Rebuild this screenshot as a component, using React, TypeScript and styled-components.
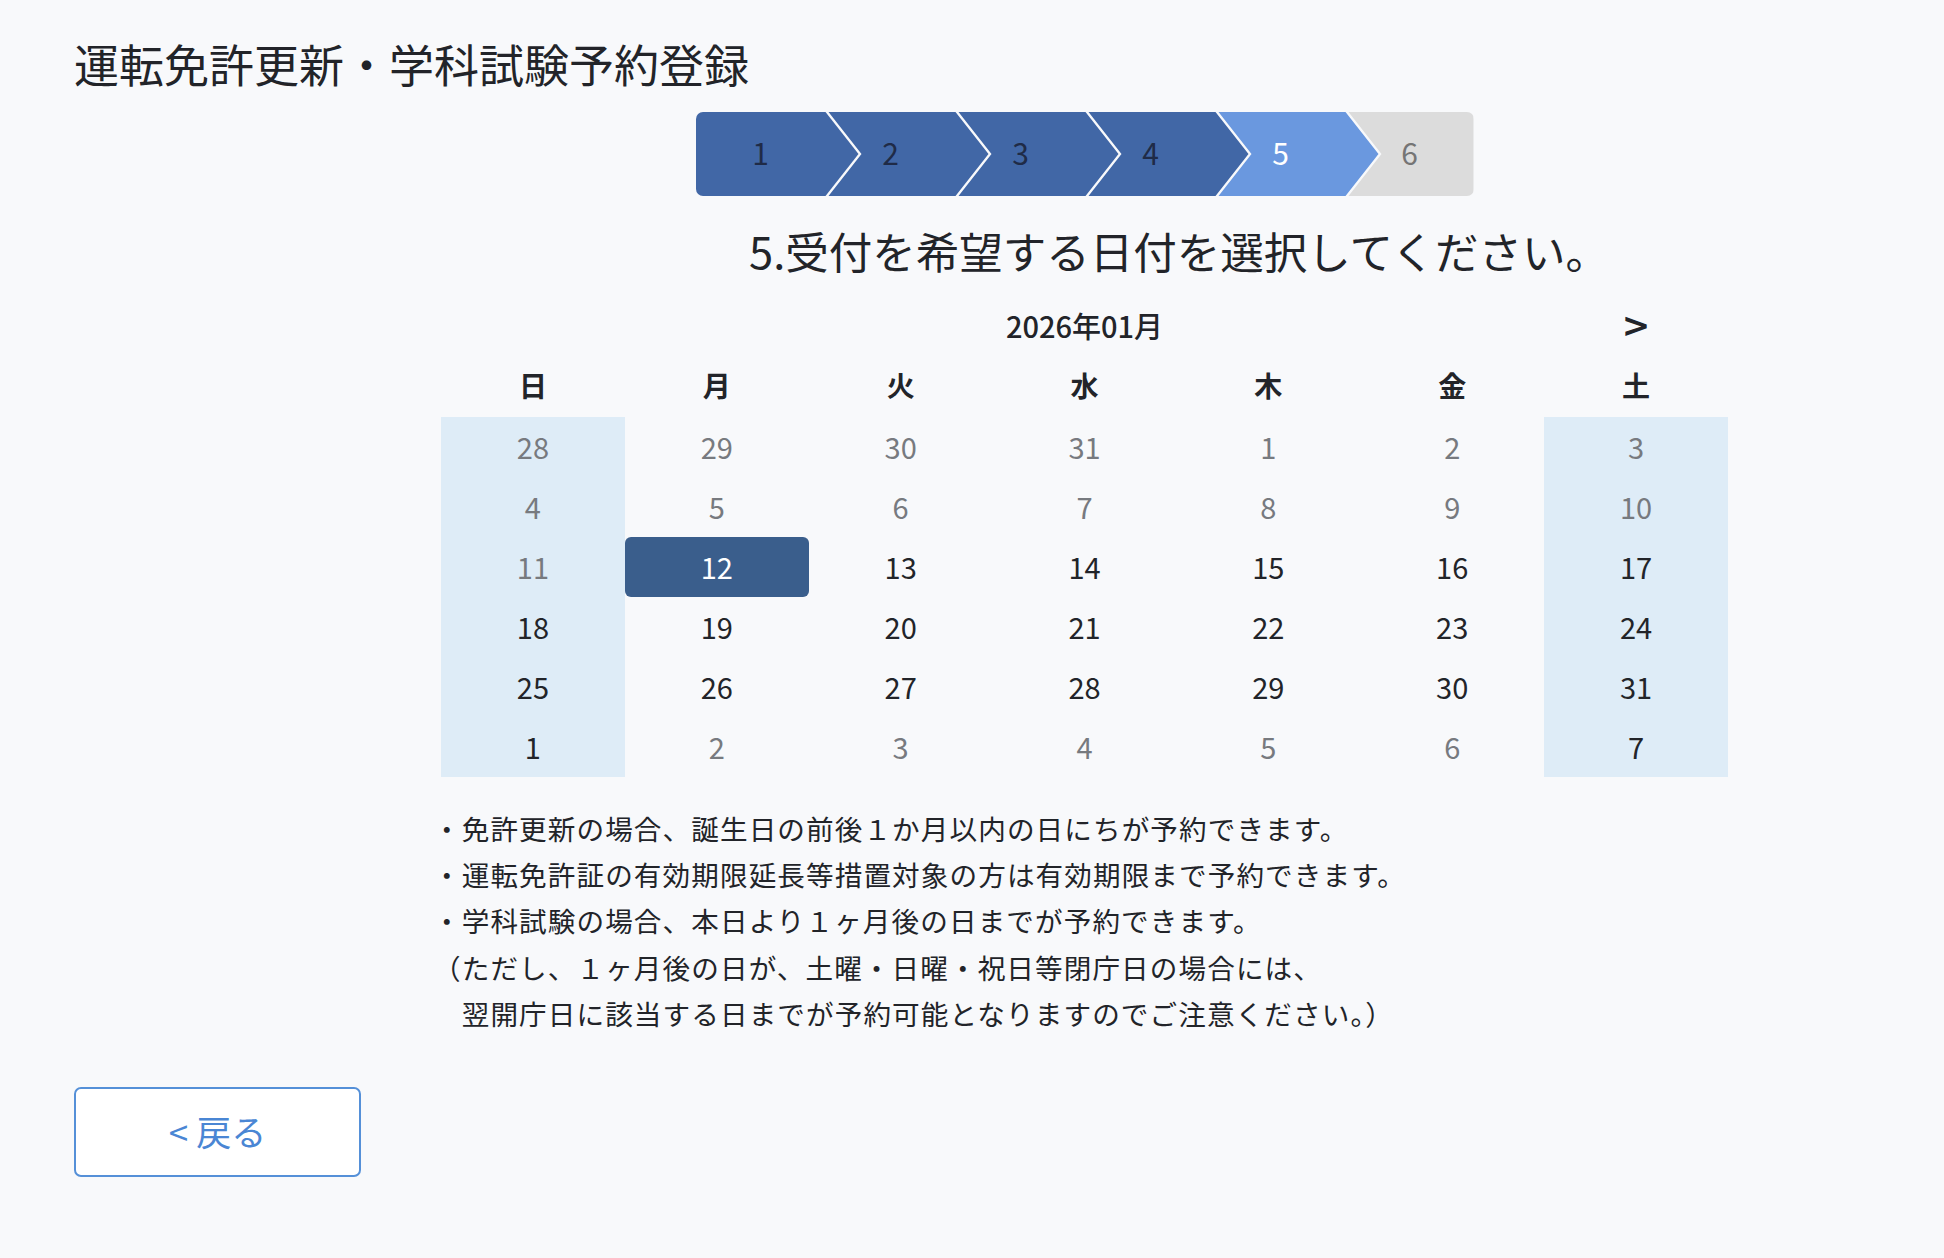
import { FC } from "react";
import styled, { createGlobalStyle } from "styled-components";

const GlobalStyle = createGlobalStyle`
	html, body {
		margin: 0;
		padding: 0;
		background: #f8f9fb;
	}

	body {
		font-family: "Noto Sans CJK JP", "Noto Sans", sans-serif;
		color: #222429;
	}
`;

const Page = styled("div")`
	min-height: 1258px;
	padding: 31px 74px 0;
	box-sizing: border-box;
`;

const Title = styled("h1")`
	margin: 0;
	font-size: 45px;
	font-weight: 400;
	line-height: 66px;
	color: #222429;
`;

const Main = styled("main")`
	width: 1287px;
	margin: 15px 0 0 367px;
	display: flex;
	flex-direction: column;
`;

const Stepper = styled("ol")`
	display: flex;
	align-self: center;
	width: 778px;
	height: 84px;
	margin: 0;
	padding: 0;
	list-style: none;
	border-radius: 7px;
	overflow: hidden;
`;

const Step = styled("li")<{ $state: "done" | "active" | "todo"; $first?: boolean; $last?: boolean }>`
	flex: none;
	width: ${({ $last }) => ($last ? "128px" : "163px")};
	margin-left: ${({ $first }) => ($first ? "0" : "-33px")};
	padding-right: ${({ $last }) => ($last ? "0" : "33px")};
	padding-bottom: 4px;
	box-sizing: border-box;
	display: flex;
	align-items: center;
	justify-content: center;
	font-size: 30px;
	background: ${({ $state }) =>
		$state === "done" ? "#4167a6" : $state === "active" ? "#6a98df" : "#dcdcdc"};
	color: ${({ $state }) =>
		$state === "done" ? "#1f2b47" : $state === "active" ? "#ffffff" : "#757575"};
	clip-path: ${({ $first, $last }) =>
		$first
			? "polygon(0 0, 130px 0, 100% 50%, 130px 100%, 0 100%)"
			: $last
			? "polygon(3px 0, 100% 0, 100% 100%, 3px 100%, 36px 50%)"
			: "polygon(3px 0, 130px 0, 100% 50%, 130px 100%, 3px 100%, 36px 50%)"};
`;

const Heading = styled("h2")`
	margin: 17px 0 0 308px;
	font-size: 43.5px;
	font-weight: 400;
	line-height: 76px;
	white-space: nowrap;
`;

const MonthBar = styled("div")`
	display: grid;
	grid-template-columns: repeat(7, 1fr);
	align-items: center;
	height: 56px;
	margin-top: 8px;
`;

const MonthLabel = styled("div")`
	grid-column: 3 / 6;
	text-align: center;
	font-size: 29px;
	font-weight: 500;
`;

const NextButton = styled("button")`
	grid-column: 7;
	justify-self: center;
	border: none;
	background: none;
	padding: 0;
	font-family: "DejaVu Sans", sans-serif;
	font-size: 34px;
	font-weight: 700;
	line-height: 1;
	color: #222429;
	cursor: pointer;
`;

const WeekRow = styled("div")`
	display: grid;
	grid-template-columns: repeat(7, 1fr);
	height: 64px;
	align-items: center;
`;

const WeekDay = styled("div")`
	text-align: center;
	font-size: 28px;
	font-weight: 700;
`;

const DaysGrid = styled("div")`
	display: grid;
	grid-template-columns: repeat(7, 1fr);
	grid-auto-rows: 60px;
`;

const DayCell = styled("div")<{ $weekend: boolean; $selected: boolean; $disabled: boolean }>`
	display: flex;
	align-items: center;
	justify-content: center;
	padding-bottom: 3px;
	box-sizing: border-box;
	font-size: 29px;
	background: ${({ $weekend }) => ($weekend ? "#deecf7" : "transparent")};
	color: ${({ $disabled }) => ($disabled ? "#777a7f" : "#222429")};
	cursor: ${({ $disabled }) => ($disabled ? "default" : "pointer")};

	${({ $selected }) =>
		$selected &&
		`
		background: #3a5e8c;
		color: #ffffff;
		border-radius: 6px;
	`}
`;

const Notes = styled("div")`
	margin-top: 28px;
	margin-left: -8px;
	font-size: 27.6px;
	line-height: 46.2px;
	letter-spacing: 1.1px;
	color: #222429;
	white-space: pre;
`;

const BackButton = styled("button")`
	display: flex;
	align-items: center;
	justify-content: center;
	gap: 8px;
	width: 287px;
	height: 90px;
	margin-top: 51px;
	padding: 0 0 4px;
	border: 2px solid #5590d8;
	border-radius: 7px;
	background: #ffffff;
	color: #4a86d4;
	font-family: inherit;
	font-size: 35px;
	cursor: pointer;
`;

const steps = [1, 2, 3, 4, 5, 6];
const current = 5;
const weekDays = ["日", "月", "火", "水", "木", "金", "土"];

interface IDay {
	day: number;
	disabled: boolean;
}

const days: IDay[] = [
	...[28, 29, 30, 31, 1, 2, 3, 4, 5, 6, 7, 8, 9, 10, 11].map((day) => ({ day, disabled: true })),
	...Array.from({ length: 20 }, (_, i) => ({ day: i + 12, disabled: false })),
	{ day: 1, disabled: false },
	...[2, 3, 4, 5, 6].map((day) => ({ day, disabled: true })),
	{ day: 7, disabled: false }
];

const notes = [
	"・免許更新の場合、誕生日の前後１か月以内の日にちが予約できます。",
	"・運転免許証の有効期限延長等措置対象の方は有効期限まで予約できます。",
	"・学科試験の場合、本日より１ヶ月後の日までが予約できます。",
	"（ただし、１ヶ月後の日が、土曜・日曜・祝日等閉庁日の場合には、",
	"　翌開庁日に該当する日までが予約可能となりますのでご注意ください。）"
];

export const App: FC = () => {
	return (
		<Page>
			<GlobalStyle />
			<Title>運転免許更新・学科試験予約登録</Title>
			<Main>
				<Stepper>
					{steps.map((n, i) => (
						<Step
							key={n}
							$first={i === 0}
							$last={i === steps.length - 1}
							$state={n < current ? "done" : n === current ? "active" : "todo"}
						>
							{n}
						</Step>
					))}
				</Stepper>
				<Heading>5.受付を希望する日付を選択してください。</Heading>
				<MonthBar>
					<MonthLabel>2026年01月</MonthLabel>
					<NextButton>&gt;</NextButton>
				</MonthBar>
				<WeekRow>
					{weekDays.map((w) => (
						<WeekDay key={w}>{w}</WeekDay>
					))}
				</WeekRow>
				<DaysGrid>
					{days.map((d, i) => (
						<DayCell
							key={i}
							$weekend={i % 7 === 0 || i % 7 === 6}
							$selected={i === 15}
							$disabled={d.disabled}
						>
							{d.day}
						</DayCell>
					))}
				</DaysGrid>
				<Notes>{notes.join("\n")}</Notes>
			</Main>
			<BackButton>
				<span>&lt;</span>
				<span>戻る</span>
			</BackButton>
		</Page>
	);
};

export default App;
